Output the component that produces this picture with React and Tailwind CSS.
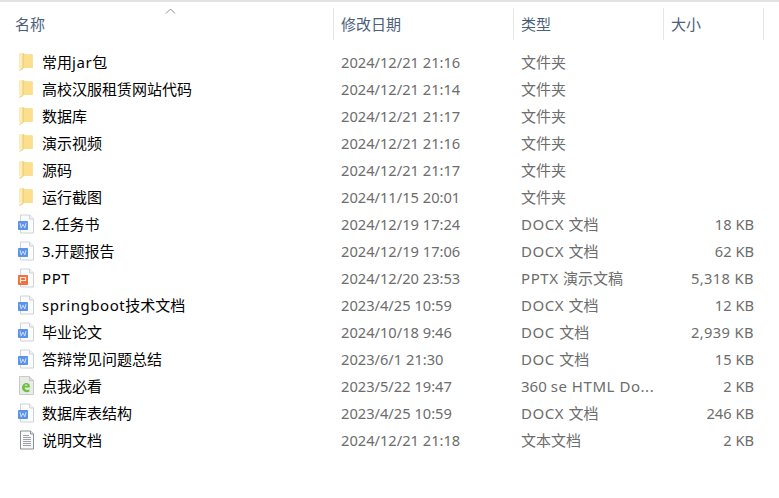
const FONT = "font-['Noto_Sans','Noto_Sans_CJK_SC',sans-serif]";

const rows = [
  ["folder", "常用jar包", "2024/12/21 21:16", "文件夹", ""],
  ["folder", "高校汉服租赁网站代码", "2024/12/21 21:14", "文件夹", ""],
  ["folder", "数据库", "2024/12/21 21:17", "文件夹", ""],
  ["folder", "演示视频", "2024/12/21 21:16", "文件夹", ""],
  ["folder", "源码", "2024/12/21 21:17", "文件夹", ""],
  ["folder", "运行截图", "2024/11/15 20:01", "文件夹", ""],
  ["word", "2.任务书", "2024/12/19 17:24", "DOCX 文档", "18 KB"],
  ["word", "3.开题报告", "2024/12/19 17:06", "DOCX 文档", "62 KB"],
  ["ppt", "PPT", "2024/12/20 23:53", "PPTX 演示文稿", "5,318 KB"],
  ["word", "springboot技术文档", "2023/4/25 10:59", "DOCX 文档", "12 KB"],
  ["word", "毕业论文", "2024/10/18 9:46", "DOC 文档", "2,939 KB"],
  ["word", "答辩常见问题总结", "2023/6/1 21:30", "DOC 文档", "15 KB"],
  ["html", "点我必看", "2023/5/22 19:47", "360 se HTML Do...", "2 KB"],
  ["word", "数据库表结构", "2023/4/25 10:59", "DOCX 文档", "246 KB"],
  ["text", "说明文档", "2024/12/21 21:18", "文本文档", "2 KB"],
];

// Latin letters run wider than digits in the reference's UI font
function Mixed({ text }) {
  const parts = text.split(/([A-Za-z][A-Za-z .]*)/);
  return (
    <>
      {parts.map((p, i) =>
        /^[A-Za-z]/.test(p) ? (
          <span key={i} className="tracking-[0.55px]">{p}</span>
        ) : (
          <span key={i}>{p}</span>
        )
      )}
    </>
  );
}

function Folder() {
  return (
    <svg className="mb-[2px] ml-[2px]" width="14" height="20" viewBox="0 0 14 20">
      <path d="M0.5 1.5h4.5l1 1h7.5v13.5H0.5z" fill="#f2cd68" />
      <path d="M4 2.5h9.5v13.5H4z" fill="#fbdf8c" />
      <path d="M0.5 1.5H4V16.5L0.5 18.5z" fill="#fdeeb9" />
      <path d="M0.5 18.5 4 16.5V1.5" fill="none" stroke="#e3c25f" strokeWidth="0.8" />
    </svg>
  );
}

function Sheet({ children, stroke = "#ced3da" }) {
  return (
    <svg className="mb-[2px]" width="18" height="20" viewBox="0 0 18 20">
      <path d="M3.5 1h9l4 4v14h-13z" fill="#fcfcfd" stroke={stroke} />
      <path d="M12.5 1v4h4" fill="#f0f2f5" stroke={stroke} />
      {children}
    </svg>
  );
}

function FileIcon({ type }) {
  if (type === "folder") return <Folder />;
  if (type === "word")
    return (
      <Sheet>
        <rect x="1" y="7" width="10" height="9" rx="0.8" fill="#5b92ea" />
        <path d="M3 9.2 4.2 13.8 6 10.2 7.8 13.8 9 9.2" fill="none" stroke="#dbe8ff" strokeWidth="0.9" />
      </Sheet>
    );
  if (type === "ppt")
    return (
      <Sheet>
        <rect x="1" y="7" width="10" height="10" rx="0.8" fill="#f1703c" />
        <path d="M3.5 15V9.5h5v3h-5" fill="none" stroke="#ffe8dd" strokeWidth="1.2" />
      </Sheet>
    );
  if (type === "html")
    return (
      <svg className="mb-[1px]" width="18" height="20" viewBox="0 0 18 20">
        <path d="M2.5 0.5h10l4 4v14h-14z" fill="#e9ebe9" stroke="#c8cac8" />
        <path d="M12.5 0.5v4h4" fill="#dcdedc" stroke="#c8cac8" />
        <path d="M12.8 11.5H7.6C7.6 13.8 10.4 14.8 12.4 13.2L12.4 15.4C9 17.4 5 15.4 5 11.6 5 7.6 8.8 6 11.2 7.4 13 8.4 13 10 12.8 11.5ZM7.7 9.8H10.5C10.5 8 7.9 8 7.7 9.8Z" fill="#6cc03a" fillRule="evenodd" />
      </svg>
    );
  return (
    <svg className="mb-[2px]" width="18" height="20" viewBox="0 0 18 20">
      <path d="M3.5 1h10l3 3v15h-13z" fill="#fafafa" stroke="#8a8f96" />
      <path d="M13.5 1v3h3" fill="#e6e7e9" stroke="#8a8f96" />
      <path d="M6 5.5h6M6 7.5h8M6 9.5h8M6 11.5h8M6 13.5h8M6 15.5h8" stroke="#9ea2a8" strokeWidth="1" />
    </svg>
  );
}

function Header({ label, sep }) {
  return (
    <div className={`flex h-8 items-center pl-[7px] text-[15px] text-[#4c607a] ${sep ? "border-l border-[#e5e5e5]" : ""}`}>
      {label}
    </div>
  );
}

export default function App() {
  return (
    <div className={`${FONT} h-[498px] w-[779px] overflow-hidden border-t-2 border-[#e3e3e3] bg-white`}>
      <div className="relative grid grid-cols-[333px_180px_150px_100px_16px] pt-[6px]">
        <div className="flex h-8 items-center pl-[15px] text-[15px] text-[#4c607a]">名称</div>
        <Header label="修改日期" sep />
        <Header label="类型" sep />
        <Header label="大小" sep />
        <div className="h-8 border-l border-[#e5e5e5]" />
        <svg className="absolute left-[165px] top-[6px]" width="11" height="7" viewBox="0 0 11 7">
          <path d="M1 5.5 5.5 1 10 5.5" fill="none" stroke="#8b8f96" strokeWidth="1" />
        </svg>
      </div>
      <div className="mt-[9px] flex flex-col">
        {rows.map(([icon, name, date, type, size]) => (
          <div key={name} className="grid h-[27px] grid-cols-[333px_180px_150px_91px] items-center text-[14.67px] leading-[27px]">
            <div className="flex items-center">
              <div className="ml-[17px] flex w-[25px] items-center">
                <FileIcon type={icon} />
              </div>
              <span className="text-[15px] text-black"><Mixed text={name} /></span>
            </div>
            <span className="pl-[8px] text-[#6d6d6d]">{date}</span>
            <span className="pl-[8px] text-[15px] text-[#6d6d6d]"><Mixed text={type} /></span>
            <span className={`text-right text-[#6d6d6d] ${size.includes(",") ? "tracking-[0.4px]" : ""}`}>{size}</span>
          </div>
        ))}
      </div>
    </div>
  );
}
